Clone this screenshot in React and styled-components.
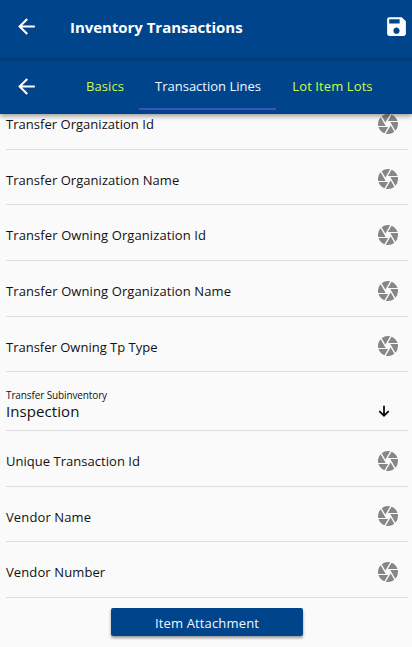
import React from "react";
import styled, { createGlobalStyle } from "styled-components";
import { MdArrowBack, MdCamera, MdSave } from "react-icons/md";

const GlobalStyle = createGlobalStyle`
  * { box-sizing: border-box; }
  body {
    margin: 0;
    background: #fafafa;
    color: #111;
    font-family: "Open Sans", "Noto Sans", sans-serif;
    font-size: 13px;
  }
  svg { display: block; flex: none; }
`;

const Screen = styled.div`
  display: flex;
  flex-direction: column;
  width: 412px;
  height: 647px;
  overflow: hidden;
`;

const TitleBar = styled.header`
  display: flex;
  align-items: center;
  flex: none;
  height: 58px;
  padding: 0 3px 6px 14px;
  background: #00458c;
  color: #fff;
`;

const IconButton = styled.button`
  display: flex;
  padding: 0;
  border: 0;
  background: none;
  color: inherit;
`;

const Title = styled.h1`
  flex: 1;
  margin: 2px 0 0 31px;
  font-size: 15px;
  line-height: 20px;
  font-weight: 700;
  letter-spacing: -0.04px;
`;

const TabBar = styled.nav`
  display: flex;
  align-items: center;
  flex: none;
  height: 56px;
  padding-left: 14px;
  background: linear-gradient(#003a76, #003f80 3px, #00458c 5px);
  color: #fff;
  box-shadow: 0 2px 5px rgba(0, 0, 0, 0.4);
  z-index: 1;
`;

const Tabs = styled.div`
  display: flex;
  height: 100%;
  margin-left: 31px;
`;

const Tab = styled.button`
  width: ${(p) => p.$width}px;
  height: 52px;
  padding: 5px 0 0 1px;
  border: 0;
  border-bottom: 2px solid ${(p) => (p.$active ? "#3f51b5" : "transparent")};
  background: none;
  color: ${(p) => (p.$active ? "#f2f7ff" : "#cdf94c")};
  font: inherit;
  letter-spacing: ${(p) => p.$spacing}px;
  text-align: center;
`;

const Form = styled.main`
  display: flex;
  flex-direction: column;
  flex: none;
  margin-top: -20px;
  padding: 0 4px 0 6px;
`;

const Field = styled.div`
  display: flex;
  align-items: flex-end;
  justify-content: space-between;
  height: ${(p) => p.$height}px;
  padding: 0 8px 13px 0;
  border-bottom: 1px solid #dedede;
  color: #868686;
`;

const Label = styled.span`
  align-self: flex-start;
  margin-top: 20px;
  color: #111;
  line-height: 20px;
  letter-spacing: ${(p) => p.$spacing}px;
  white-space: nowrap;
`;

const SelectField = styled(Field)`
  padding: 0 16px 9px 0;
  color: #000;
`;

const SelectText = styled.div`
  display: flex;
  flex-direction: column;
  color: #111;
`;

const Caption = styled.span`
  margin-bottom: -1px;
  font-size: 10px;
  line-height: 13px;
  letter-spacing: -0.12px;
`;

const Value = styled.span`
  font-size: 15px;
  line-height: 20px;
  letter-spacing: 0.08px;
`;

const SelectArrow = styled.svg`
  width: 16px;
  height: 16px;
  margin-bottom: 2px;
  fill: none;
  stroke: currentColor;
  stroke-width: 1.7;
`;

const AttachButton = styled.button`
  align-self: center;
  width: 192px;
  height: 28px;
  margin: 10px 0 0;
  padding: 2px 0 1px;
  border: 0;
  border-radius: 2px;
  background: #00458c;
  color: #f2f7ff;
  font: inherit;
  letter-spacing: 0.15px;
  box-shadow: 0 2px 3px rgba(0, 0, 0, 0.4);
`;

function ScanField({ label, spacing, height }) {
  return (
    <Field $height={height}>
      <Label $spacing={spacing}>{label}</Label>
      <MdCamera size={24} />
    </Field>
  );
}

export default function App() {
  return (
    <Screen>
      <GlobalStyle />
      <TitleBar>
        <IconButton aria-label="Back"><MdArrowBack size={25} /></IconButton>
        <Title>Inventory Transactions</Title>
        <IconButton aria-label="Save"><MdSave size={25} /></IconButton>
      </TitleBar>
      <TabBar>
        <IconButton aria-label="Previous"><MdArrowBack size={25} /></IconButton>
        <Tabs>
          <Tab $width={69} $spacing={0.05}>Basics</Tab>
          <Tab $width={137} $spacing={0} $active>Transaction Lines</Tab>
          <Tab $width={112} $spacing={0.1}>Lot Item Lots</Tab>
        </Tabs>
      </TabBar>
      <Form>
        <ScanField label="Transfer Organization Id" spacing={0.03} height={56} />
        <ScanField label="Transfer Organization Name" spacing={0.05} height={55} />
        <ScanField label="Transfer Owning Organization Id" spacing={0.1} height={56} />
        <ScanField label="Transfer Owning Organization Name" spacing={0.1} height={56} />
        <ScanField label="Transfer Owning Tp Type" spacing={0} height={55} />
        <SelectField $height={59}>
          <SelectText>
            <Caption>Transfer Subinventory</Caption>
            <Value>Inspection</Value>
          </SelectText>
          <SelectArrow viewBox="0 0 16 16">
            <path d="M8 2.8v10M3.3 8.2 8 12.9l4.7-4.7" />
          </SelectArrow>
        </SelectField>
        <ScanField label="Unique Transaction Id" spacing={0.03} height={56} />
        <ScanField label="Vendor Name" spacing={0.12} height={55} />
        <ScanField label="Vendor Number" spacing={0.11} height={56} />
        <AttachButton>Item Attachment</AttachButton>
      </Form>
    </Screen>
  );
}
